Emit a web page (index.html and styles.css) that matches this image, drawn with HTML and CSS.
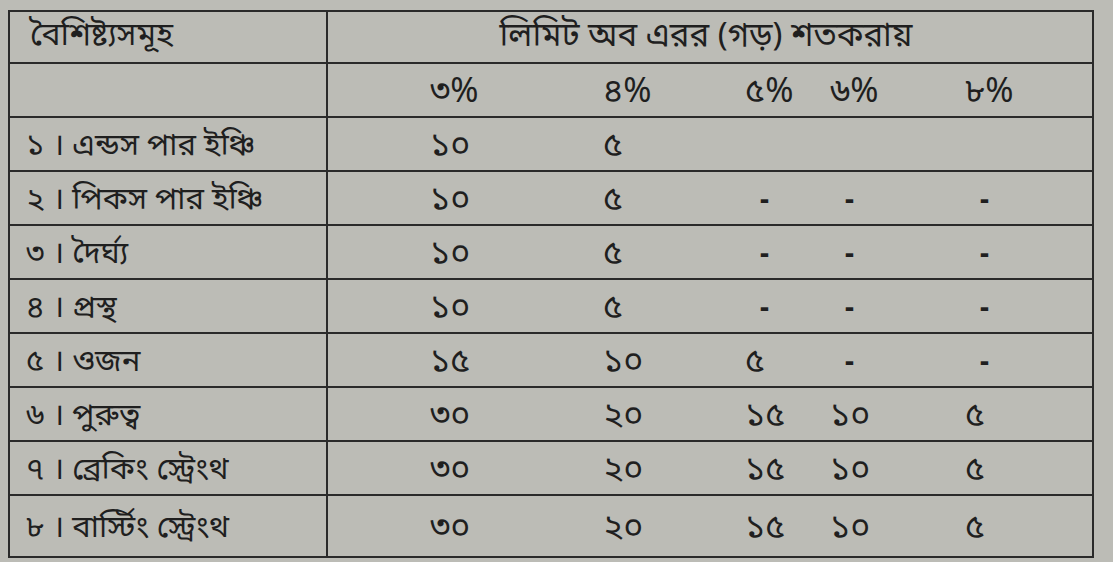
FILE: index.html
```html
<!DOCTYPE html>
<html lang="bn">
<head>
<meta charset="utf-8">
<title>লিমিট অব এরর</title>
<link rel="stylesheet" href="styles.css">
</head>
<body>
<div class="sheet">
  <div class="table">
    <div class="row head">
      <div class="label">বৈশিষ্ট্যসমূহ</div>
      <div class="span">লিমিট অব এরর (গড়) শতকরায়</div>
    </div>
    <div class="row">
      <div class="label"></div>
      <div class="c">৩%</div><div class="c">৪%</div><div class="c">৫%</div><div class="c">৬%</div><div class="c">৮%</div>
    </div>
    <div class="row">
      <div class="label">১ । এন্ডস পার ইঞ্চি</div>
      <div class="c">১০</div><div class="c">৫</div><div class="c"></div><div class="c"></div><div class="c"></div>
    </div>
    <div class="row">
      <div class="label">২ । পিকস পার ইঞ্চি</div>
      <div class="c">১০</div><div class="c">৫</div><div class="c dash">-</div><div class="c dash">-</div><div class="c dash">-</div>
    </div>
    <div class="row">
      <div class="label">৩ । দৈর্ঘ্য</div>
      <div class="c">১০</div><div class="c">৫</div><div class="c dash">-</div><div class="c dash">-</div><div class="c dash">-</div>
    </div>
    <div class="row">
      <div class="label">৪ । প্রস্থ</div>
      <div class="c">১০</div><div class="c">৫</div><div class="c dash">-</div><div class="c dash">-</div><div class="c dash">-</div>
    </div>
    <div class="row">
      <div class="label">৫ । ওজন</div>
      <div class="c">১৫</div><div class="c">১০</div><div class="c">৫</div><div class="c dash">-</div><div class="c dash">-</div>
    </div>
    <div class="row">
      <div class="label">৬ । পুরুত্ব</div>
      <div class="c">৩০</div><div class="c">২০</div><div class="c">১৫</div><div class="c">১০</div><div class="c">৫</div>
    </div>
    <div class="row">
      <div class="label">৭ । ব্রেকিং স্ট্রেংথ</div>
      <div class="c">৩০</div><div class="c">২০</div><div class="c">১৫</div><div class="c">১০</div><div class="c">৫</div>
    </div>
    <div class="row last">
      <div class="label">৮ । বার্স্টিং স্ট্রেংথ</div>
      <div class="c">৩০</div><div class="c">২০</div><div class="c">১৫</div><div class="c">১০</div><div class="c">৫</div>
    </div>
  </div>
</div>
</body>
</html>
```

FILE: styles.css
```css
html, body {
  margin: 0;
  padding: 0;
  background: #bcbcb6;
}
body {
  width: 1113px;
  height: 562px;
  overflow: hidden;
  font-family: "Noto Sans Bengali", "Noto Serif Bengali", "Lohit Bengali", "FreeSans", "Noto Sans", sans-serif;
  color: #1f1f1f;
}
.sheet {
  padding: 10px 0 0 8px;
}
.table {
  width: 1082px;
  border: 2px solid #2a2a2a;
  border-bottom: none;
}
.row {
  display: grid;
  grid-template-columns: 318px 275px 142px 85px 135px 1fr;
  height: 54px;
  box-sizing: border-box;
  border-bottom: 2px solid #2a2a2a;
  align-items: center;
  font-size: 34px;
  line-height: 1;
}
.row.head {
  height: 52px;
}
.row.last {
  height: 62px;
}
.head .span {
  grid-column: 2 / 7;
  text-align: center;
  padding-right: 8px;
  font-size: 33px;
}
.label {
  height: 100%;
  display: flex;
  align-items: center;
  padding-left: 16px;
  padding-top: 6px;
  border-right: 2px solid #2a2a2a;
  font-size: 31px;
  box-sizing: border-box;
  white-space: nowrap;
}
.head .label {
  padding-left: 20px;
  padding-top: 0;
  font-size: 32px;
}
.c {
  white-space: nowrap;
  padding-top: 7px;
}
.row > .c:nth-child(2) {
  padding-left: 102px;
}
.dash {
  padding-left: 15px;
  font-weight: 700;
  font-size: 28px;
}
```
